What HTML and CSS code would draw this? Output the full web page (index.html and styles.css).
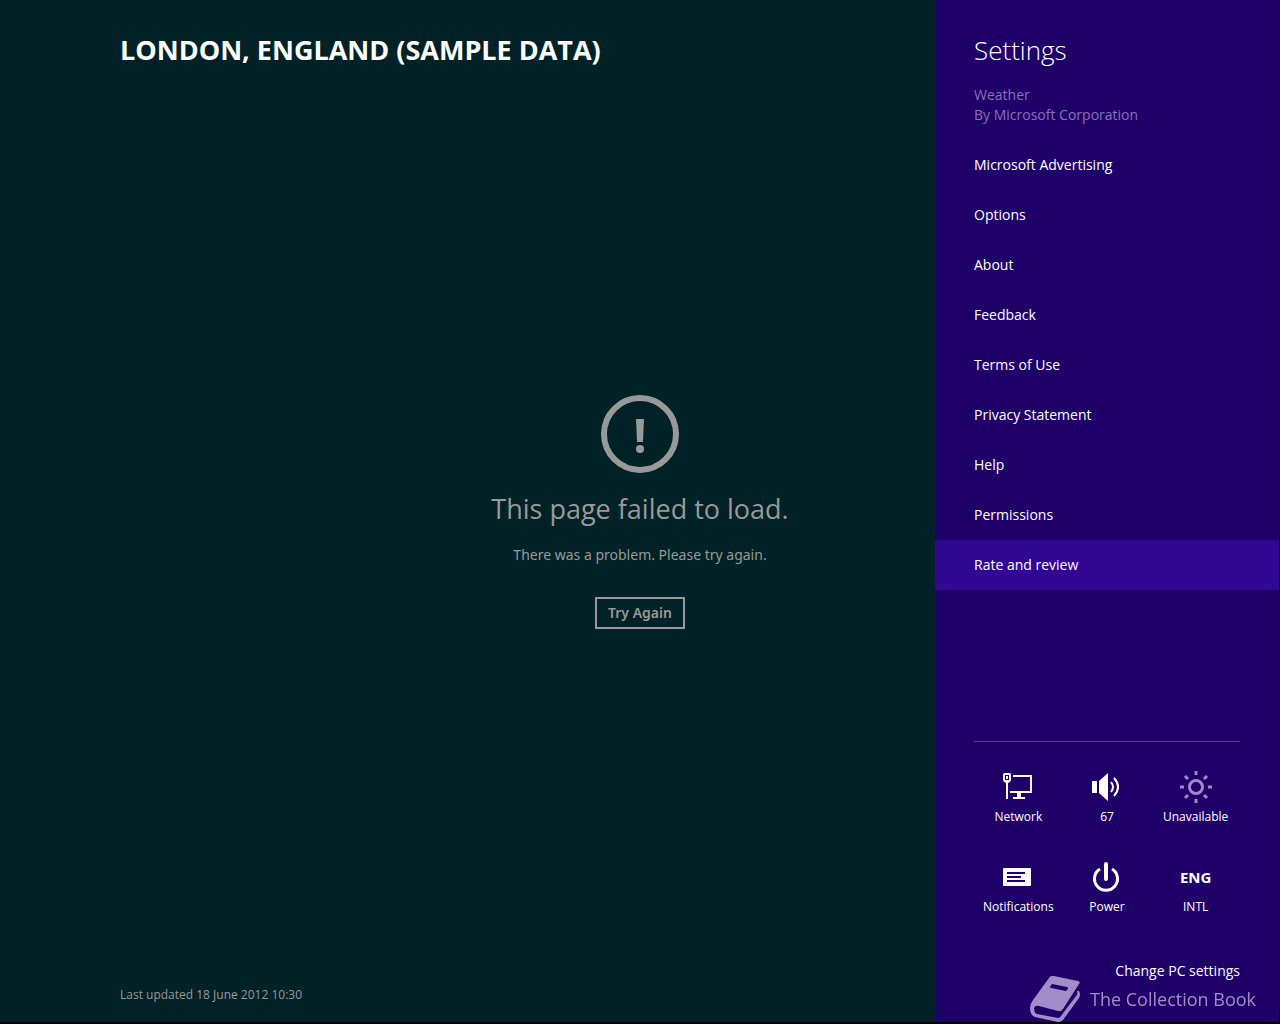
FILE: index.html
```
<!DOCTYPE html>
<html lang="en">
<head>
    <meta charset="UTF-8">
    <meta name="viewport" content="width=device-width, initial-scale=1.0">
    <title>Weather</title>
    <link rel="stylesheet" href="styles.css">
</head>
<body>

    <!-- Weather app -->
    <main class="app">
        <header class="app-header">
            <h1>LONDON, ENGLAND (SAMPLE DATA)</h1>
        </header>

        <section class="error">
            <svg class="error-icon" viewBox="0 0 78 78" aria-hidden="true">
                <circle cx="39" cy="39" r="36" fill="none" stroke="currentColor" stroke-width="6"/>
                <path d="M35 24h8l-1 23h-6z" fill="currentColor"/>
                <circle cx="39" cy="54" r="4" fill="currentColor"/>
            </svg>
            <h2>This page failed to load.</h2>
            <p>There was a problem. Please try again.</p>
            <button class="btn-retry" type="button">Try Again</button>
        </section>

        <footer class="app-footer">Last updated 18 June 2012 10:30</footer>
    </main>

    <!-- Settings charm -->
    <aside class="settings">
        <h2>Settings</h2>
        <p class="app-info">Weather<br>By Microsoft Corporation</p>

        <nav class="menu">
            <a href="#">Microsoft Advertising</a>
            <a href="#">Options</a>
            <a href="#">About</a>
            <a href="#">Feedback</a>
            <a href="#">Terms of Use</a>
            <a href="#">Privacy Statement</a>
            <a href="#">Help</a>
            <a href="#">Permissions</a>
            <a href="#" class="active">Rate and review</a>
        </nav>

        <div class="quick">
            <button class="tile" type="button">
                <svg viewBox="0 0 32 32" aria-hidden="true">
                    <path fill-rule="evenodd" d="M2 2h6l1 1v6q0 2-3 3v16H4V12q-3-1-3-3V3zM3 4v5h4V4z" fill="currentColor"/>
                    <path d="M4 5h2v3H4z" fill="currentColor"/>
                    <path d="M11 5h18v16H8" fill="none" stroke="currentColor" stroke-width="2"/>
                    <path d="M15 22h4v4h4v2H11v-2h4z" fill="currentColor"/>
                </svg>
                <span>Network</span>
            </button>
            <button class="tile" type="button">
                <svg viewBox="0 0 32 32" aria-hidden="true">
                    <path d="M1 10h5v12H1zM8 10l9-8v28l-9-8z" fill="currentColor"/>
                    <path d="M20 11q4 5 0 10M23 7q8 9 0 18" fill="none" stroke="currentColor" stroke-width="2"/>
                </svg>
                <span>67</span>
            </button>
            <button class="tile dim" type="button">
                <svg viewBox="0 0 32 32" aria-hidden="true">
                    <circle cx="16" cy="16" r="6.500" fill="none" stroke="currentColor" stroke-width="3"/>
                    <path d="M16 0v4M16 28v4M0 16h4M28 16h4M5 5l3 3M24 24l3 3M27 5l-3 3M8 24l-3 3" stroke="currentColor" stroke-width="3"/>
                </svg>
                <span>Unavailable</span>
            </button>
            <button class="tile" type="button">
                <svg viewBox="0 0 32 32" aria-hidden="true">
                    <path fill-rule="evenodd" d="M2 7h26q1 0 1 1v16q0 1-1 1H2q-1 0-1-1V8q0-1 1-1zM5 11v2h18v-2zM5 15v2h14v-2zM5 19v2h18v-2z" fill="currentColor"/>
                </svg>
                <span>Notifications</span>
            </button>
            <button class="tile" type="button">
                <svg viewBox="0 0 32 32" aria-hidden="true">
                    <path d="M9 8a11.500 11.500 0 1 0 12 0" fill="none" stroke="currentColor" stroke-width="3"/>
                    <path d="M15 3v15" stroke="currentColor" stroke-width="4" stroke-linecap="round"/>
                </svg>
                <span>Power</span>
            </button>
            <button class="tile" type="button">
                <strong>ENG</strong>
                <span>INTL</span>
            </button>
        </div>

        <a href="#" class="pc-settings">Change PC settings</a>
    </aside>

    <!-- Watermark -->
    <div class="watermark">
        <svg viewBox="0 0 50 46" aria-hidden="true">
            <path fill-rule="evenodd" d="M24 0l24 5q3 1 1 3L33 33q-2 3-5 2L9 30q-4-1-5 2 0 5 3 6l21 4q2 0 3-2L46 20q2-2 1-5l2 0q2 4 0 7L33 44q-2 2-5 2L5 41Q0 39 0 32 0 28 3 24L19 2q2-3 5-2zM22 8l-2 3q0 1 1 1l15 3q1 0 2-3 0-1-1-1z" fill="currentColor"/>
        </svg>
        <span>The Collection Book</span>
    </div>

</body>
</html>
```
FILE: styles.css
```
:root {
    --app-bg: #002126;
    --app-muted: #999999;
    --panel-bg: #1f0068;
    --panel-active: #320791;
    --panel-muted: #8a70bc;
    --panel-dim: #a088d0;
}

* {
    margin: 0;
    padding: 0;
    box-sizing: border-box;
}

body {
    background: var(--app-bg);
    color: white;
    font-family: "Open Sans", "Noto Sans", sans-serif;
    font-size: 14px;
    line-height: 20px;
}

a {
    color: inherit;
    text-decoration: none;
}

button {
    background: none;
    border: none;
    color: inherit;
    font: inherit;
    cursor: pointer;
}

/* App */
.app {
    display: flex;
    flex-direction: column;
    min-height: 100vh;
    border-bottom: 2px solid black;
}

.app-header {
    padding: 30px 120px 0;
}

.app-header h1 {
    font-size: 27px;
    line-height: 40px;
}

.app-footer {
    padding: 31px 120px 17px;
    color: var(--app-muted);
    font-size: 12px;
}

/* Error message */
.error {
    flex: 1;
    display: flex;
    flex-direction: column;
    align-items: center;
    justify-content: center;
    color: var(--app-muted);
    font-family: "Noto Sans", sans-serif;
}

.error-icon {
    width: 78px;
    height: 78px;
    margin-bottom: 16px;
}

.error h2 {
    font-family: "Open Sans", sans-serif;
    font-size: 27px;
    font-weight: normal;
    line-height: 40px;
    margin-bottom: 16px;
}

.error p {
    margin-bottom: 32px;
}

.btn-retry {
    padding: 4px 11px;
    border: 2px solid var(--app-muted);
    font-weight: 600;
}

/* Settings panel */
.settings {
    position: fixed;
    top: 0;
    right: 0;
    bottom: 0;
    width: 345px;
    display: flex;
    flex-direction: column;
    padding-top: 30px;
    padding-bottom: 41px;
    background: var(--panel-bg);
    border-right: 1px solid black;
    border-bottom: 2px solid black;
    overflow: auto;
}

.settings h2 {
    padding: 0 39px;
    font-size: 26px;
    font-weight: 300;
    line-height: 40px;
}

.app-info {
    padding: 15px 39px;
    color: var(--panel-muted);
}

.menu a {
    display: block;
    padding: 15px 39px;
}

.menu .active {
    background: var(--panel-active);
}

/* Quick settings */
.quick {
    display: grid;
    grid-template-columns: repeat(3, 1fr);
    row-gap: 34px;
    margin: auto 39px 44px;
    padding-top: 29px;
    border-top: 1px solid #55389a;
}

.tile {
    display: flex;
    flex-direction: column;
    align-items: center;
    gap: 4px;
    font-size: 12px;
}

.tile svg,
.tile strong {
    height: 32px;
}

.tile svg {
    width: 32px;
}

.tile strong {
    font-size: 15px;
    line-height: 32px;
}

.dim svg {
    color: var(--panel-dim);
}

.pc-settings {
    align-self: flex-end;
    margin-right: 39px;
}

/* Watermark */
.watermark {
    position: fixed;
    right: 24px;
    bottom: 2px;
    display: flex;
    align-items: center;
    gap: 10px;
    color: #a28dc9;
    font-size: 18px;
}

.watermark svg {
    width: 50px;
    height: 46px;
}
```
